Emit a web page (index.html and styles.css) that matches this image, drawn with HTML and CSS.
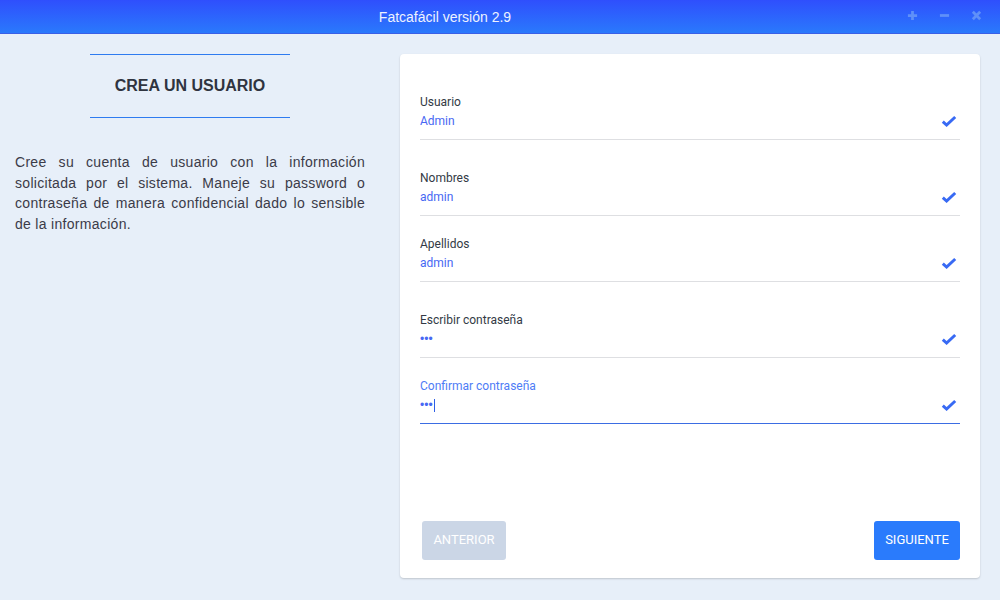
FILE: index.html
```html
<!DOCTYPE html>
<html lang="es">
<head>
<meta charset="utf-8">
<title>Fatcafácil</title>
<link rel="stylesheet" href="styles.css">
</head>
<body>
<header class="titlebar">
  <div class="title">Fatcafácil versión 2.9</div>
  <div class="win-controls">
    <svg class="win-btn" viewBox="0 0 12 12"><path d="M6 1V11M1 6H11"/></svg>
    <svg class="win-btn" viewBox="0 0 12 12"><path d="M1 6H11"/></svg>
    <svg class="win-btn" viewBox="0 0 12 12"><path d="M2 2L10 10M10 2L2 10"/></svg>
  </div>
</header>
<main class="main">
  <section class="intro">
    <div class="intro-head">
      <h1 class="intro-title">CREA UN USUARIO</h1>
    </div>
    <p class="intro-text">Cree su cuenta de usuario con la información solicitada por el sistema. Maneje su password o contraseña de manera confidencial dado lo sensible de la información.</p>
  </section>
  <section class="card">
    <div class="fields">
      <div class="field field-first">
        <div class="field-label">Usuario</div>
        <div class="field-row"><span class="field-value">Admin</span><svg class="check" viewBox="0 0 16 12"><path d="M1.8 6.6L5.6 10L14.2 2"/></svg></div>
      </div>
      <div class="field field-wide">
        <div class="field-label">Nombres</div>
        <div class="field-row"><span class="field-value">admin</span><svg class="check" viewBox="0 0 16 12"><path d="M1.8 6.6L5.6 10L14.2 2"/></svg></div>
      </div>
      <div class="field">
        <div class="field-label">Apellidos</div>
        <div class="field-row"><span class="field-value">admin</span><svg class="check" viewBox="0 0 16 12"><path d="M1.8 6.6L5.6 10L14.2 2"/></svg></div>
      </div>
      <div class="field field-wide">
        <div class="field-label">Escribir contraseña</div>
        <div class="field-row"><span class="field-value dots">•••</span><svg class="check" viewBox="0 0 16 12"><path d="M1.8 6.6L5.6 10L14.2 2"/></svg></div>
      </div>
      <div class="field field-active">
        <div class="field-label">Confirmar contraseña</div>
        <div class="field-row"><span class="field-value dots">•••<span class="caret"></span></span><svg class="check" viewBox="0 0 16 12"><path d="M1.8 6.6L5.6 10L14.2 2"/></svg></div>
      </div>
    </div>
    <div class="actions">
      <button class="btn btn-disabled">ANTERIOR</button>
      <button class="btn btn-primary">SIGUIENTE</button>
    </div>
  </section>
</main>
</body>
</html>
```
FILE: styles.css
```css
* { box-sizing: border-box; }
html, body { margin: 0; padding: 0; }
body {
  width: 1000px;
  height: 600px;
  overflow: hidden;
  background: #e7eff9;
  font-family: "Liberation Sans", Arial, sans-serif;
  display: flex;
  flex-direction: column;
}
.titlebar {
  height: 34px;
  flex: none;
  background: linear-gradient(#2f4ffd, #2a79fc);
  border-bottom: 1px solid #3a5fe6;
  display: flex;
  align-items: center;
  justify-content: center;
  position: relative;
}
.title {
  color: #eef2ff;
  font-size: 14px;
  margin-left: -110px;
}
.win-controls {
  position: absolute;
  right: 18px;
  top: 10px;
  display: flex;
  gap: 21px;
}
.win-btn {
  width: 11px;
  height: 11px;
  stroke: #5f90f8;
  stroke-width: 3;
  fill: none;
}
.main {
  flex: 1;
  display: flex;
  padding: 20px 20px 22px 0;
}
.intro {
  width: 380px;
  flex: none;
  padding: 0 15px;
}
.intro-head {
  width: 200px;
  margin: 0 auto;
  border-top: 1px solid #2e7bf0;
  border-bottom: 1px solid #2e7bf0;
  padding: 22px 0;
}
.intro-title {
  margin: 0;
  text-align: center;
  font-size: 16px;
  line-height: 18px;
  font-weight: bold;
  color: #2f3440;
}
.intro-text {
  margin: 34px 0 0;
  font-size: 14px;
  line-height: 20.5px;
  letter-spacing: 0.3px;
  text-align: justify;
  color: #3b3b48;
}
.card {
  flex: 1;
  margin-left: 20px;
  background: #fff;
  border-radius: 4px;
  box-shadow: 0 1px 2px rgba(0, 0, 0, 0.18);
  display: flex;
  flex-direction: column;
  justify-content: space-between;
  padding: 40px 20px 18px;
}
.field {
  margin-top: 20px;
  border-bottom: 1px solid #dedfe2;
  padding-bottom: 10px;
  font-family: Roboto, "Liberation Sans", sans-serif;
  font-size: 12px;
}
.field-first { margin-top: 0; }
.field-wide { margin-top: 30px; }
.field-label {
  line-height: 16px;
  color: #333a45;
}
.field-row {
  margin-top: 3px;
  height: 16px;
  display: flex;
  align-items: center;
  justify-content: space-between;
}
.field-value {
  color: #4768f3;
  line-height: 16px;
}
.dots {
  font-family: "Liberation Sans", sans-serif;
  font-size: 12px;
  display: flex;
  align-items: center;
}
.caret {
  display: inline-block;
  width: 1px;
  height: 13px;
  background: #2d5fe6;
  margin-left: 1px;
}
.check {
  width: 16px;
  height: 12px;
  margin-right: 3px;
  fill: none;
  stroke: #386af4;
  stroke-width: 3;
}
.field-active { border-bottom-color: #3b6de3; }
.field-active .field-label { color: #4e7cf6; }
.actions {
  display: flex;
  justify-content: space-between;
  padding-left: 2px;
}
.btn {
  height: 39px;
  border: none;
  border-radius: 3px;
  color: #fff;
  font-family: Roboto, "Liberation Sans", sans-serif;
  font-size: 13px;
  font-weight: 400;
  padding: 0 0 2px;
}
.btn-disabled { background: #cbd6e6; width: 84px; }
.btn-primary { background: #2a7bfc; width: 86px; }
```
